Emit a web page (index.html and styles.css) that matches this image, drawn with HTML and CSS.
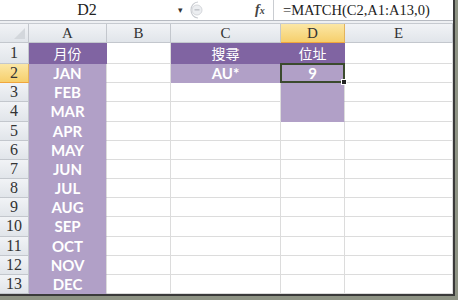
FILE: index.html
```html
<!DOCTYPE html>
<html lang="zh-Hant">
<head>
  <meta charset="UTF-8">
  <title>MATCH</title>
  <link rel="stylesheet" href="styles.css">
</head>
<body>

  <div class="window">
    <!-- Barra de fórmulas -->
    <div class="formula-bar">
      <div class="name-box">D2</div>
      <div class="name-arrow">&#9662;</div>
      <div class="btns">
        <svg width="14" height="18" viewBox="0 0 14 18"><path d="M9 1 A7 8 0 0 0 9 17" fill="none" stroke="#c9ccd1" stroke-width="1.2"/><circle cx="8" cy="9" r="5" fill="#eceef1" stroke="#d6d8dc"/><rect x="5.5" y="8" width="5" height="1.6" fill="#c4c7cc"/></svg>
      </div>
      <div class="fx">f<span>x</span></div>
      <div class="formula">=MATCH(C2,A1:A13,0)</div>
    </div>
    <div class="bar-gap"></div>

    <!-- Planilha -->
    <div class="sheet">
      <div class="row head-row">
        <div class="corner"></div>
        <div class="col-head">A</div>
        <div class="col-head">B</div>
        <div class="col-head">C</div>
        <div class="col-head on">D</div>
        <div class="col-head">E</div>
      </div>
      <div class="row">
        <div class="row-head">1</div>
        <div class="cell dark cjk">月份</div>
        <div class="cell"></div>
        <div class="cell dark cjk">搜尋</div>
        <div class="cell dark cjk">位址</div>
        <div class="cell"></div>
      </div>
      <div class="row">
        <div class="row-head on">2</div>
        <div class="cell light">JAN</div>
        <div class="cell"></div>
        <div class="cell light">AU*</div>
        <div class="cell light sel">9</div>
        <div class="cell"></div>
      </div>
      <div class="row">
        <div class="row-head">3</div>
        <div class="cell light">FEB</div>
        <div class="cell"></div>
        <div class="cell"></div>
        <div class="cell light"></div>
        <div class="cell"></div>
      </div>
      <div class="row">
        <div class="row-head">4</div>
        <div class="cell light">MAR</div>
        <div class="cell"></div>
        <div class="cell"></div>
        <div class="cell light"></div>
        <div class="cell"></div>
      </div>
      <div class="row">
        <div class="row-head">5</div>
        <div class="cell light">APR</div>
        <div class="cell"></div>
        <div class="cell"></div>
        <div class="cell"></div>
        <div class="cell"></div>
      </div>
      <div class="row">
        <div class="row-head">6</div>
        <div class="cell light">MAY</div>
        <div class="cell"></div>
        <div class="cell"></div>
        <div class="cell"></div>
        <div class="cell"></div>
      </div>
      <div class="row">
        <div class="row-head">7</div>
        <div class="cell light">JUN</div>
        <div class="cell"></div>
        <div class="cell"></div>
        <div class="cell"></div>
        <div class="cell"></div>
      </div>
      <div class="row">
        <div class="row-head">8</div>
        <div class="cell light">JUL</div>
        <div class="cell"></div>
        <div class="cell"></div>
        <div class="cell"></div>
        <div class="cell"></div>
      </div>
      <div class="row">
        <div class="row-head">9</div>
        <div class="cell light">AUG</div>
        <div class="cell"></div>
        <div class="cell"></div>
        <div class="cell"></div>
        <div class="cell"></div>
      </div>
      <div class="row">
        <div class="row-head">10</div>
        <div class="cell light">SEP</div>
        <div class="cell"></div>
        <div class="cell"></div>
        <div class="cell"></div>
        <div class="cell"></div>
      </div>
      <div class="row">
        <div class="row-head">11</div>
        <div class="cell light">OCT</div>
        <div class="cell"></div>
        <div class="cell"></div>
        <div class="cell"></div>
        <div class="cell"></div>
      </div>
      <div class="row">
        <div class="row-head">12</div>
        <div class="cell light">NOV</div>
        <div class="cell"></div>
        <div class="cell"></div>
        <div class="cell"></div>
        <div class="cell"></div>
      </div>
      <div class="row">
        <div class="row-head">13</div>
        <div class="cell light">DEC</div>
        <div class="cell"></div>
        <div class="cell"></div>
        <div class="cell"></div>
        <div class="cell"></div>
      </div>
    </div>
  </div>

</body>
</html>
```

FILE: styles.css
```css
body {
  margin: 0;
  background: #8e9384;
  font-family: 'Liberation Serif', serif;
}

/* Janela com borda escura e sombra */
.window {
  width: 453px;
  height: 294px;
  background: #fff;
  border-right: 2px solid #3a3a3a;
  border-bottom: 2px solid #3a3a3a;
  display: flex;
  flex-direction: column;
  overflow: hidden;
}

.formula-bar {
  height: 20px;
  display: flex;
  align-items: center;
  background: #fff;
  border-bottom: 1px solid #b6bac1;
  color: #222;
}

.name-box {
  width: 174px;
  text-align: center;
  font-size: 16px;
}

.name-arrow {
  width: 12px;
  font-size: 9px;
  color: #333;
  text-align: center;
}

.btns {
  width: 66px;
  padding-left: 3px;
  display: flex;
  align-items: center;
}

.fx {
  width: 18px;
  font-style: italic;
  font-weight: bold;
  font-size: 14px;
  color: #444;
}

.fx span {
  font-size: 10px;
}

.formula {
  flex: 1;
  height: 20px;
  line-height: 20px;
  border-left: 1px solid #c9ccd1;
  padding-left: 9px;
  font-size: 14.5px;
}

.bar-gap {
  height: 2px;
  background: #eef0f3;
  border-bottom: 1px solid #c6cad0;
}

/* Grade da planilha */
.sheet {
  flex: 1;
  display: flex;
  flex-direction: column;
}

.row {
  flex: 1;
  display: grid;
  grid-template-columns: 29px 78px 64px 110px 64px 108px;
}

.head-row {
  flex: 0 0 18px;
}

.corner,
.col-head,
.row-head {
  background: linear-gradient(#f1f3f6, #e1e5ea);
  border-right: 1px solid #c3c7cd;
  border-bottom: 1px solid #c3c7cd;
  color: #333;
  text-align: center;
  box-sizing: border-box;
}

.corner {
  position: relative;
}

.corner::after {
  content: '';
  position: absolute;
  right: 3px;
  bottom: 3px;
  border-left: 11px solid transparent;
  border-bottom: 11px solid #d3d7dc;
}

.col-head {
  font-size: 15px;
  line-height: 18px;
}

.row-head {
  font-size: 16px;
  display: flex;
  align-items: center;
  justify-content: center;
}

.col-head.on,
.row-head.on {
  background: linear-gradient(#fbe7a6, #f6cf6c);
  border-bottom-color: #f0a63c;
  border-right-color: #e3b45c;
}

.cell {
  border-right: 1px solid #dcdcdc;
  border-bottom: 1px solid #dcdcdc;
  box-sizing: border-box;
  color: #fff;
  text-align: center;
  font-family: 'Lato', sans-serif;
  font-size: 15px;
  font-weight: bold;
  display: flex;
  align-items: center;
  justify-content: center;
  position: relative;
}

.cell.dark {
  background: #8064a2;
  border-color: #8064a2;
}

.cell.light {
  background: #b1a0c7;
  border-bottom-color: #b1a0c7;
}

.cell.cjk {
  font-family: 'Noto Sans CJK TC', sans-serif;
  font-size: 14px;
  font-weight: normal;
}

/* Célula selecionada */
.sel::after {
  content: '';
  position: absolute;
  left: -1px;
  top: -1px;
  right: -1px;
  bottom: -1px;
  border: 2px solid #3b4a2e;
}

.sel::before {
  content: '';
  position: absolute;
  right: -3px;
  bottom: -3px;
  width: 4px;
  height: 4px;
  background: #222;
  border: 1px solid #fff;
  z-index: 1;
}
```
